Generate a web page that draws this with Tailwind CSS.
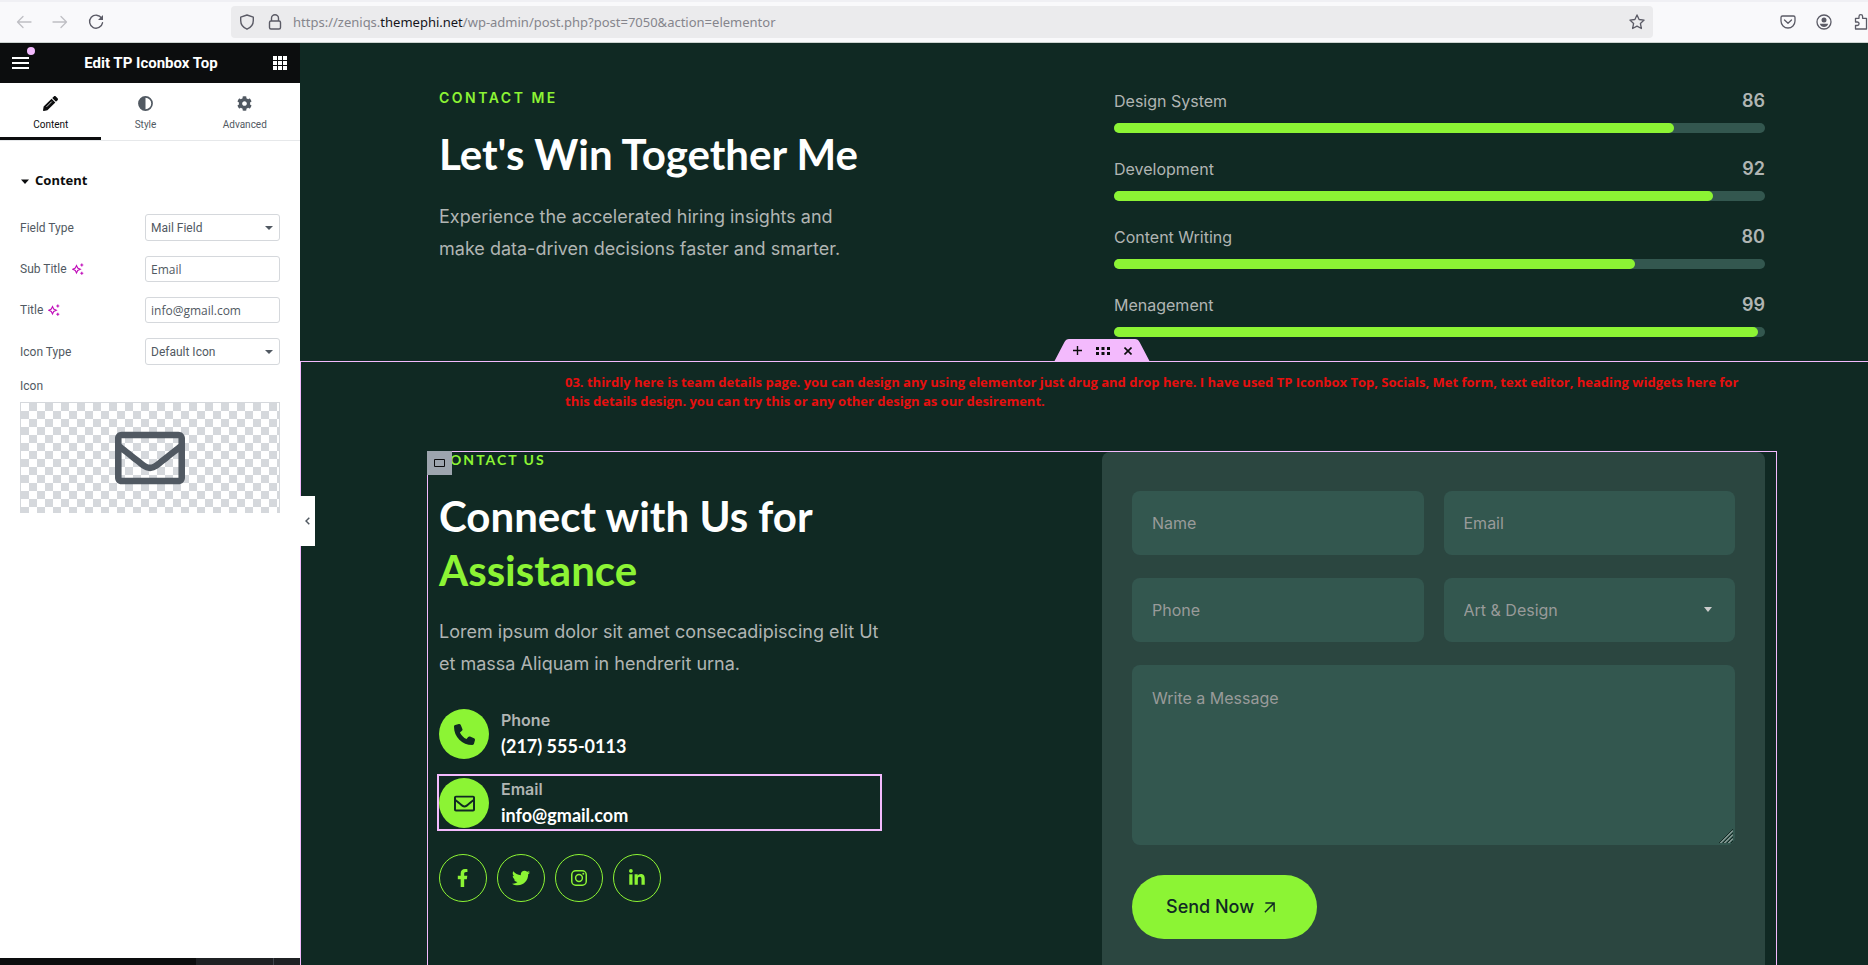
<!DOCTYPE html>
<html lang="en">
<head>
<meta charset="utf-8">
<title>Edit TP Iconbox Top</title>
<script src="https://cdn.jsdelivr.net/npm/@tailwindcss/browser@4"></script>
</head>
<body class="h-screen flex flex-col overflow-hidden bg-[#102923] font-['Inter',sans-serif]">

<!-- Browser toolbar -->
<header class="h-[43px] shrink-0 flex items-center bg-[#f9f9fb] border-t-2 border-[#f0f0f4] border-b border-b-[#ccd3d0] text-[#5b5b66] overflow-hidden">
  <nav class="flex items-center gap-5 pl-4 w-[231px] shrink-0" aria-label="Browser navigation">
    <button aria-label="Back" class="text-[#bfbfc4]"><svg class="size-4" viewBox="0 0 16 16" fill="none" stroke="currentColor" stroke-width="1.3" stroke-linecap="round" stroke-linejoin="round"><path d="M15 8H1.5M7 2.5 1.5 8 7 13.5"/></svg></button>
    <button aria-label="Forward" class="text-[#bfbfc4]"><svg class="size-4" viewBox="0 0 16 16" fill="none" stroke="currentColor" stroke-width="1.3" stroke-linecap="round" stroke-linejoin="round"><path d="M1 8h13.5M9 2.5 14.500 8 9 13.500"/></svg></button>
    <button aria-label="Reload"><svg class="size-4" viewBox="0 0 16 16" fill="none" stroke="currentColor" stroke-width="1.4" stroke-linecap="round"><path d="M13.600 4.200A6.500 6.500 0 1 0 14.500 8.800"/><path d="M15 1v5h-5z" fill="currentColor" stroke="none"/></svg></button>
  </nav>
  <div class="flex-1 h-8 flex items-center rounded bg-[#ebebed] pl-2 pr-2">
    <svg class="size-4" viewBox="0 0 16 16" fill="none" stroke="currentColor" stroke-width="1.4" stroke-linejoin="round"><path d="M8 1 14.300 3.200V6.500C14.300 10.500 12 13.500 8 15.200 4 13.500 1.700 10.500 1.700 6.500V3.200z"/></svg>
    <svg class="size-4 ml-3" viewBox="0 0 16 16" fill="none" stroke="currentColor" stroke-width="1.4"><rect x="2.500" y="7" width="11" height="8" rx="1.500"/><path d="M4.500 7V4.300a3.500 3.500 0 0 1 7 0V7"/></svg>
    <p class="ml-2.5 pt-0.5 flex-1 font-['Noto_Sans',sans-serif] text-[13px] text-[#85858c]">https://zeniqs.<span class="text-[#15141a]">themephi.net</span>/wp-admin/post.php?post=7050&amp;action=elementor</p>
    <button aria-label="Bookmark"><svg class="size-4" viewBox="0 0 16 16" fill="none" stroke="currentColor" stroke-width="1.3" stroke-linejoin="round"><path d="M8 .9l2.100 4.600 5 .6-3.700 3.400 1 5L8 12.100l-4.400 2.400 1-5L.900 6.100l5-.6z"/></svg></button>
  </div>
  <div class="w-[215px] shrink-0 flex items-center justify-end gap-5 pl-4">
    <button aria-label="Save to Pocket"><svg class="size-4" viewBox="0 0 16 16" fill="none" stroke="currentColor" stroke-width="1.300" stroke-linecap="round" stroke-linejoin="round"><path d="M2.500 2h11A1.500 1.500 0 0 1 15 3.500V7A7 7 0 0 1 1 7V3.500A1.500 1.500 0 0 1 2.500 2z"/><path d="M4.500 6 8 9.300 11.500 6"/></svg></button>
    <button aria-label="Account"><svg class="size-4" viewBox="0 0 16 16"><circle cx="8" cy="8" r="7" fill="none" stroke="currentColor" stroke-width="1.300"/><circle cx="8" cy="5.900" r="2.500" fill="currentColor"/><path d="M3.800 9.800h8.400Q11 13 8 13T3.800 9.800z" fill="currentColor"/></svg></button>
    <button aria-label="Extensions" class="w-4 pl-0.5 overflow-hidden"><svg class="size-4 max-w-none" viewBox="0 0 16 16" fill="none" stroke="currentColor" stroke-width="1.300" stroke-linejoin="round"><path d="M1.500 5.500V4.300H5V2.500a1.700 1.700 0 0 1 3.600 0V4.300H12.500V15H1.500V11.500H3.300a1.700 1.700 0 0 0 0-3.500H1.500z"/></svg></button>
  </div>
</header>

<div class="flex-1 min-h-0 flex">

  <!-- Editor panel -->
  <aside class="relative w-[300px] shrink-0 flex flex-col bg-white font-['Roboto',sans-serif] text-[#515962]">
    <div class="h-10 shrink-0 flex items-center justify-between bg-[#0c0d0e] text-white pl-3 pr-[13px]">
      <button aria-label="Menu" class="relative"><svg class="w-[17px] h-3" viewBox="0 0 17 12" fill="currentColor"><path d="M0 0h17v2H0zM0 5h17v2H0zM0 10h17v2H0z"/></svg><span class="absolute -top-2.5 left-[15px] size-2 rounded-full bg-[#f3bafd]"></span></button>
      <h1 class="text-[15px] font-bold">Edit TP Iconbox Top</h1>
      <button aria-label="Widgets"><svg class="size-3.5" viewBox="0 0 14 14" fill="currentColor"><path d="M0 0h4v4H0zM5 0h4v4H5zM10 0h4v4h-4zM0 5h4v4H0zM5 5h4v4H5zM10 5h4v4h-4zM0 10h4v4H0zM5 10h4v4H5zM10 10h4v4h-4z"/></svg></button>
    </div>
    <div class="h-[58px] shrink-0 flex border-b border-[#e6e8ea] text-[10px] leading-4" role="tablist">
      <button role="tab" aria-selected="true" class="flex-auto flex flex-col items-center pt-[13px] text-[#0c0d0e] border-b-[3px] border-[#0c0d0e]">
        <svg class="size-[15px] mb-1.5" viewBox="0 0 512 512" fill="currentColor"><path d="M497.900 142.100l-46.100 46.100c-4.700 4.700-12.300 4.700-17 0l-111-111c-4.700-4.700-4.700-12.300 0-17l46.100-46.100c18.700-18.700 49.100-18.700 67.900 0l60.100 60.100c18.800 18.700 18.800 49.100 0 67.900zM284.200 99.800L21.600 362.400.4 483.900c-2.900 16.400 11.400 30.600 27.800 27.800l121.500-21.300 262.600-262.600c4.700-4.700 4.700-12.300 0-17l-111-111c-4.800-4.700-12.400-4.700-17.100 0z"/><path d="M120 370 300 190" stroke="#fff" stroke-width="26"/></svg>Content</button>
      <button role="tab" aria-selected="false" class="flex-auto flex flex-col items-center pt-[13px]">
        <svg class="size-[15px] mb-1.5" viewBox="0 0 16 16"><circle cx="8" cy="8" r="7" fill="none" stroke="currentColor" stroke-width="1.800"/><path d="M8 1a7 7 0 0 0 0 14z" fill="currentColor"/></svg>Style</button>
      <button role="tab" aria-selected="false" class="flex-auto flex flex-col items-center pt-[13px]">
        <svg class="size-[15px] mb-1.5" viewBox="0 0 512 512" fill="currentColor"><path d="M487.400 315.700l-42.600-24.600c4.300-23.200 4.300-47 0-70.200l42.600-24.600c4.900-2.800 7.100-8.600 5.500-14-11.100-35.600-30-67.800-54.700-94.600-3.800-4.100-10-5.100-14.800-2.300L380.800 110c-17.900-15.400-38.500-27.300-60.800-35.100V25.800c0-5.600-3.900-10.500-9.400-11.700-36.700-8.200-74.300-7.800-109.200 0-5.500 1.200-9.400 6.100-9.400 11.700V75c-22.200 7.900-42.800 19.800-60.800 35.100L88.700 85.500c-4.900-2.800-11-1.900-14.800 2.300-24.700 26.700-43.600 58.900-54.700 94.600-1.700 5.400.6 11.200 5.500 14L67.300 221c-4.300 23.200-4.300 47 0 70.200l-42.600 24.600c-4.900 2.800-7.100 8.600-5.500 14 11.100 35.600 30 67.800 54.700 94.600 3.800 4.100 10 5.100 14.800 2.300l42.600-24.600c17.900 15.400 38.500 27.300 60.800 35.100v49.200c0 5.600 3.900 10.500 9.400 11.700 36.700 8.200 74.300 7.800 109.200 0 5.500-1.200 9.400-6.100 9.400-11.700v-49.200c22.200-7.900 42.800-19.800 60.800-35.100l42.600 24.600c4.900 2.800 11 1.900 14.800-2.300 24.700-26.700 43.600-58.900 54.700-94.600 1.500-5.500-.7-11.300-5.600-14.100zM256 336c-44.100 0-80-35.900-80-80s35.900-80 80-80 80 35.900 80 80-35.900 80-80 80z"/></svg>Advanced</button>
    </div>

    <div class="flex-1 min-h-0 px-5 pt-[30px] text-xs">
      <h2><button class="flex items-center gap-1.5 h-5 font-['Noto_Sans',sans-serif] font-bold text-[13px] text-[#0c0d0e]"><svg class="w-2 h-[5px] ml-px" viewBox="0 0 8 5" fill="currentColor"><path d="M0 .5h8L4 5z"/></svg>Content</button></h2>
      <div class="mt-[23px] flex flex-col gap-[15px]">
        <div class="flex items-center justify-between">
          <label for="field-type">Field Type</label>
          <div class="relative w-[135px]">
            <select id="field-type" class="appearance-none w-full h-[27px] rounded-[3px] border border-[#d5d8dc] bg-white pl-[5px] block"><option>Mail Field</option></select>
            <svg class="absolute right-[7px] top-3 w-2 h-1 pointer-events-none" viewBox="0 0 8 4" fill="currentColor"><path d="M0 0h8L4 4z"/></svg>
          </div>
        </div>
        <div class="flex items-center justify-between">
          <label for="sub-title" class="flex items-center gap-[5px]">Sub Title
            <svg class="size-3 text-[#c00bb9]" viewBox="0 0 12 12" fill="none" stroke="currentColor" stroke-width="1.100"><path d="M4.500 2.500 5.700 5 8.300 6.200 5.700 7.400 4.500 10 3.300 7.400.700 6.200 3.300 5zM9.800.5v3M8.300 2h3M9.800 8.700v3M8.300 10.200h3"/></svg></label>
          <input id="sub-title" value="Email" class="w-[135px] h-[26px] rounded-[3px] border border-[#d5d8dc] px-[5px] font-['Open_Sans',sans-serif]">
        </div>
        <div class="flex items-center justify-between">
          <label for="title" class="flex items-center gap-[5px]">Title
            <svg class="size-3 text-[#c00bb9]" viewBox="0 0 12 12" fill="none" stroke="currentColor" stroke-width="1.100"><path d="M4.500 2.500 5.700 5 8.300 6.200 5.700 7.400 4.500 10 3.300 7.400.700 6.200 3.300 5zM9.800.5v3M8.300 2h3M9.800 8.700v3M8.300 10.200h3"/></svg></label>
          <input id="title" value="info@gmail.com" class="w-[135px] h-[26px] rounded-[3px] border border-[#d5d8dc] px-[5px] font-['Open_Sans',sans-serif]">
        </div>
        <div class="flex items-center justify-between">
          <label for="icon-type">Icon Type</label>
          <div class="relative w-[135px]">
            <select id="icon-type" class="appearance-none w-full h-[27px] rounded-[3px] border border-[#d5d8dc] bg-white pl-[5px] block"><option>Default Icon</option></select>
            <svg class="absolute right-[7px] top-3 w-2 h-1 pointer-events-none" viewBox="0 0 8 4" fill="currentColor"><path d="M0 0h8L4 4z"/></svg>
          </div>
        </div>
      </div>
      <p class="mt-[13px] leading-4">Icon</p>
      <button aria-label="Choose icon" class="mt-2 w-full h-[111px] flex items-center justify-center border border-b-0 border-[#d5d8dc] bg-[conic-gradient(#d5d8dc_25%,#fff_0_50%,#d5d8dc_0_75%,#fff_0)] bg-[length:16px_16px]">
        <svg class="w-[70px] h-[70px]" viewBox="0 0 512 512" fill="currentColor"><path d="M464 64H48C21.490 64 0 85.490 0 112v288c0 26.510 21.490 48 48 48h416c26.510 0 48-21.490 48-48V112c0-26.510-21.490-48-48-48zm0 48v40.805c-22.422 18.259-58.168 46.651-134.587 106.490-16.841 13.247-50.201 45.072-73.413 44.701-23.208.375-56.579-31.459-73.413-44.701C106.180 199.465 70.425 171.067 48 152.805V112h416zM48 400V214.398c22.914 18.251 55.409 43.862 104.938 82.646 21.857 17.205 60.134 55.186 103.062 54.955 42.717.231 80.509-37.199 103.053-54.947 49.528-38.783 82.032-64.401 104.947-82.653V400H48z"/></svg>
      </button>
    </div>
    <div class="h-[7px] shrink-0 flex justify-end bg-[#0c0d0e]"><div class="w-[78px] bg-[#1f2124] border-r border-[#3f444b]"></div><div class="w-[26px] bg-[#1f2124]"></div></div>

    <button aria-label="Collapse panel" class="absolute z-10 left-[300px] top-[453px] w-[15px] h-[50px] flex items-center justify-center bg-white"><svg class="w-[5px] h-2" viewBox="0 0 5 8" fill="none" stroke="currentColor" stroke-width="1.500"><path d="M4.300.8 1 4l3.300 3.200"/></svg></button>
  </aside>

  <!-- Page canvas -->
  <main class="flex-1 min-w-0 flex flex-col text-[#b0b5b3]">
    <section class="h-[318px] shrink-0 ml-[127px] mr-[91px] grid grid-cols-2">
      <div class="pl-3 pt-[45px]">
        <p class="text-sm leading-5 font-semibold tracking-[2.500px] text-[#8cf434]">CONTACT ME</p>
        <h2 class="mt-[19px] font-['Lato',sans-serif] font-bold text-[42px] leading-[54px] text-white">Let's Win Together Me</h2>
        <p class="mt-5 text-lg leading-8">Experience the accelerated hiring insights and<br>make data-driven decisions faster and smarter.</p>
      </div>
      <div class="px-3 pt-[46px] flex flex-col gap-6">
        <div><div class="flex justify-between items-center h-6"><span>Design System</span><span class="text-lg leading-6 font-semibold">86</span></div><div class="mt-2.5 h-2.5 rounded-full bg-[#33574f]"><div class="h-full rounded-full bg-[#8cf434]" style="width:86%"></div></div></div>
        <div><div class="flex justify-between items-center h-6"><span>Development</span><span class="text-lg leading-6 font-semibold">92</span></div><div class="mt-2.5 h-2.5 rounded-full bg-[#33574f]"><div class="h-full rounded-full bg-[#8cf434]" style="width:92%"></div></div></div>
        <div><div class="flex justify-between items-center h-6"><span>Content Writing</span><span class="text-lg leading-6 font-semibold">80</span></div><div class="mt-2.5 h-2.5 rounded-full bg-[#33574f]"><div class="h-full rounded-full bg-[#8cf434]" style="width:80%"></div></div></div>
        <div><div class="flex justify-between items-center h-6"><span>Menagement</span><span class="text-lg leading-6 font-semibold">99</span></div><div class="mt-2.5 h-2.5 rounded-full bg-[#33574f]"><div class="h-full rounded-full bg-[#8cf434]" style="width:99%"></div></div></div>
      </div>
    </section>

    <section class="relative flex-1 min-h-0 flex flex-col border-t border-l border-[#f3bafd]">
      <div class="absolute bottom-full left-[753px] w-24 h-[23px] text-[#0c0d0e]">
        <svg class="absolute inset-0 size-full" viewBox="0 0 96 23" fill="#f3bafd"><path d="M0 23 10.500 3Q12 0 15 0H81Q84 0 85.500 3L96 23z"/></svg>
        <div class="relative h-full flex items-center justify-center gap-3.5">
          <button aria-label="Add section"><svg class="size-[9px]" viewBox="0 0 9 9" stroke="currentColor" stroke-width="1.400"><path d="M4.500 0v9M0 4.500h9"/></svg></button>
          <button aria-label="Edit section"><svg class="w-3.5 h-2" viewBox="0 0 14 8" fill="currentColor"><path d="M0 0h3v3H0zM5.500 0h3v3h-3zM11 0h3v3h-3zM0 5h3v3H0zM5.500 5h3v3h-3zM11 5h3v3h-3z"/></svg></button>
          <button aria-label="Delete section"><svg class="size-2" viewBox="0 0 8 8" stroke="currentColor" stroke-width="1.600"><path d="M.5.5l7 7M7.500.5l-7 7"/></svg></button>
        </div>
      </div>

      <p class="ml-[264px] pt-[11px] text-[13px] leading-[19px] font-bold font-['Open_Sans',sans-serif] text-[#e60f0f] whitespace-nowrap">03. thirdly here is team details page. you can design any using elementor just drug and drop here. I have used TP Iconbox Top, Socials, Met form, text editor, heading widgets here for<br>this details design. you can try this or any other design as our desirement.</p>

      <div class="relative mt-10 flex-1 min-h-0 ml-[126px] mr-[91px] grid grid-cols-2 border border-b-0 border-[#f3bafd]">
        <button aria-label="Edit column" class="absolute -top-px -left-px w-[25px] h-6 flex items-center justify-center bg-[#9da5ae] text-[#0c0d0e]"><svg class="w-[11px] h-2" viewBox="0 0 11 8" fill="none" stroke="currentColor"><path d="M.5.5h10v7H.5z"/></svg></button>
        <div class="pl-[11px]">
          <p class="text-sm leading-4 font-['Lato',sans-serif] font-bold tracking-[2px] text-[#8cf434]">CONTACT US</p>
          <h2 class="mt-[21px] font-['Lato',sans-serif] font-bold text-[42px] leading-[54px] text-white">Connect with Us for<br><span class="text-[#8cf434]">Assistance</span></h2>
          <p class="mt-[19px] text-lg leading-8">Lorem ipsum dolor sit amet consecadipiscing elit Ut<br>et massa Aliquam in hendrerit urna.</p>
          <div class="mt-[29px] h-[50px] flex items-center gap-3">
            <span class="size-[50px] shrink-0 rounded-full bg-[#8cf434] flex items-center justify-center text-[#102923]"><svg class="size-[21px]" viewBox="0 0 512 512" fill="currentColor"><path d="M164.900 24.600c-7.700-18.600-28-28.500-47.400-23.200l-88 24C12.100 30.200 0 46 0 64C0 311.400 200.600 512 448 512c18 0 33.800-12.100 38.600-29.500l24-88c5.300-19.400-4.600-39.700-23.200-47.400l-96-40c-16.300-6.800-35.200-2.100-46.300 11.600L304.700 368C234.300 334.700 177.300 277.700 144 207.300L193.300 167c13.700-11.200 18.400-30 11.600-46.300l-40-96z"/></svg></span>
            <div><p class="leading-6 font-semibold">Phone</p><p class="font-['Lato',sans-serif] font-bold text-lg leading-7 text-white">(217) 555-0113</p></div>
          </div>
          <div class="mt-[17px] h-[53px] pt-0.5 pb-px w-[441px] flex items-center gap-3 outline-2 outline-[#f3bafd] outline-solid">
            <span class="size-[50px] shrink-0 rounded-full bg-[#8cf434] flex items-center justify-center text-[#102923]"><svg class="size-[21px]" viewBox="0 0 512 512" fill="currentColor"><path d="M464 64H48C21.490 64 0 85.490 0 112v288c0 26.510 21.490 48 48 48h416c26.510 0 48-21.490 48-48V112c0-26.510-21.490-48-48-48zm0 48v40.805c-22.422 18.259-58.168 46.651-134.587 106.490-16.841 13.247-50.201 45.072-73.413 44.701-23.208.375-56.579-31.459-73.413-44.701C106.180 199.465 70.425 171.067 48 152.805V112h416zM48 400V214.398c22.914 18.251 55.409 43.862 104.938 82.646 21.857 17.205 60.134 55.186 103.062 54.955 42.717.231 80.509-37.199 103.053-54.947 49.528-38.783 82.032-64.401 104.947-82.653V400H48z"/></svg></span>
            <div><p class="leading-6 font-semibold">Email</p><p class="font-['Lato',sans-serif] font-bold text-lg leading-7 text-white">info@gmail.com</p></div>
          </div>
          <div class="mt-[25px] flex gap-2.5 text-[#8cf434]">
            <a href="#" aria-label="Facebook" class="size-12 rounded-full border border-[#8cf434] flex items-center justify-center"><svg class="h-[18px]" viewBox="0 0 320 512" fill="currentColor"><path d="M279.140 288l14.220-92.660h-88.910v-60.130c0-25.350 12.420-50.060 52.240-50.060h40.420V6.260S260.430 0 225.360 0c-73.220 0-121.080 44.380-121.080 124.720v70.620H22.890V288h81.390v224h100.170V288z"/></svg></a>
            <a href="#" aria-label="Twitter" class="size-12 rounded-full border border-[#8cf434] flex items-center justify-center"><svg class="h-[18px]" viewBox="0 0 512 512" fill="currentColor"><path d="M459.370 151.716c.325 4.548.325 9.097.325 13.645 0 138.720-105.583 298.558-298.558 298.558-59.452 0-114.680-17.219-161.137-47.106 8.447.974 16.568 1.299 25.340 1.299 49.055 0 94.213-16.568 130.274-44.832-46.132-.975-84.792-31.188-98.112-72.772 6.498.974 12.995 1.624 19.818 1.624 9.421 0 18.843-1.300 27.614-3.573-48.081-9.747-84.143-51.980-84.143-102.985v-1.299c13.969 7.797 30.214 12.670 47.431 13.319-28.264-18.843-46.781-51.005-46.781-87.391 0-19.492 5.197-37.360 14.294-52.954 51.655 63.675 129.300 105.258 216.365 109.807-1.624-7.797-2.599-15.918-2.599-24.040 0-57.828 46.782-104.934 104.934-104.934 30.213 0 57.502 12.670 76.670 33.137 23.715-4.548 46.456-13.320 66.599-25.340-7.798 24.366-24.366 44.833-46.132 57.827 21.117-2.273 41.584-8.122 60.426-16.243-14.292 20.791-32.161 39.308-52.628 54.253z"/></svg></a>
            <a href="#" aria-label="Instagram" class="size-12 rounded-full border border-[#8cf434] flex items-center justify-center"><svg class="size-4" viewBox="0 0 16 16" fill="none" stroke="currentColor" stroke-width="1.500"><rect x=".75" y=".75" width="14.500" height="14.500" rx="4"/><circle cx="8" cy="8" r="3.400"/><circle cx="12.300" cy="3.800" r="1" fill="currentColor" stroke="none"/></svg></a>
            <a href="#" aria-label="LinkedIn" class="size-12 rounded-full border border-[#8cf434] flex items-center justify-center"><svg class="h-[18px]" viewBox="0 0 448 512" fill="currentColor"><path d="M100.280 448H7.400V148.900h92.880zM53.790 108.100C24.090 108.100 0 83.500 0 53.800a53.790 53.790 0 0 1 107.580 0c0 29.700-24.100 54.300-53.790 54.300zM447.900 448h-92.680V302.400c0-34.700-.7-79.200-48.290-79.200-48.290 0-55.690 37.700-55.690 76.700V448h-92.780V148.900h89.080v40.800h1.300c12.400-23.500 42.690-48.300 87.880-48.300 94 0 111.280 61.900 111.280 142.300V448z"/></svg></a>
          </div>
        </div>

        <form class="mr-[11px] px-[30px] pt-[39px] rounded-t-lg bg-[#2b4640] grid grid-cols-2 gap-x-5 gap-y-[23px] content-start">
          <input aria-label="Name" placeholder="Name" class="w-full h-16 rounded-lg bg-[#33574f] px-5 placeholder:text-[#999b9a]">
          <input aria-label="Email" type="email" placeholder="Email" class="w-full h-16 rounded-lg bg-[#33574f] px-5 placeholder:text-[#999b9a]">
          <input aria-label="Phone" type="tel" placeholder="Phone" class="w-full h-16 rounded-lg bg-[#33574f] px-5 placeholder:text-[#999b9a]">
          <div class="relative">
            <select aria-label="Service" class="appearance-none w-full h-16 rounded-lg bg-[#33574f] px-5 text-[#999b9a]"><option>Art &amp; Design</option></select>
            <svg class="absolute right-[23px] top-[29px] w-2 h-[5px] pointer-events-none" viewBox="0 0 8 5" fill="#ccc"><path d="M0 0h8L4 5z"/></svg>
          </div>
          <div class="relative col-span-2 h-[180px]">
            <textarea aria-label="Message" placeholder="Write a Message" class="block size-full resize-none rounded-lg bg-[#33574f] px-5 py-[21px] placeholder:text-[#999b9a]"></textarea>
            <svg class="absolute right-0.5 bottom-0.5 size-3.5 pointer-events-none" viewBox="0 0 14 14" stroke-width="1"><path d="M0 14 14 0M4 14 14 4M8 14 14 8M12 14l2-2" stroke="#152b25"/><path d="M1.500 14 14 1.500M5.500 14 14 5.500M9.500 14 14 9.500" stroke="#c5cbc9"/></svg>
          </div>
          <button type="submit" class="mt-[7px] justify-self-start h-16 w-[185px] pl-[34px] rounded-full bg-[#8cf434] text-[#102923] text-lg font-medium flex items-center gap-2.5">Send Now<svg class="size-[11px]" viewBox="0 0 12 12" fill="none" stroke="currentColor" stroke-width="1.600"><path d="M1.500 1H11v9.500M11 1 1 11.300"/></svg></button>
        </form>
      </div>
    </section>
  </main>
</div>
</body>
</html>
